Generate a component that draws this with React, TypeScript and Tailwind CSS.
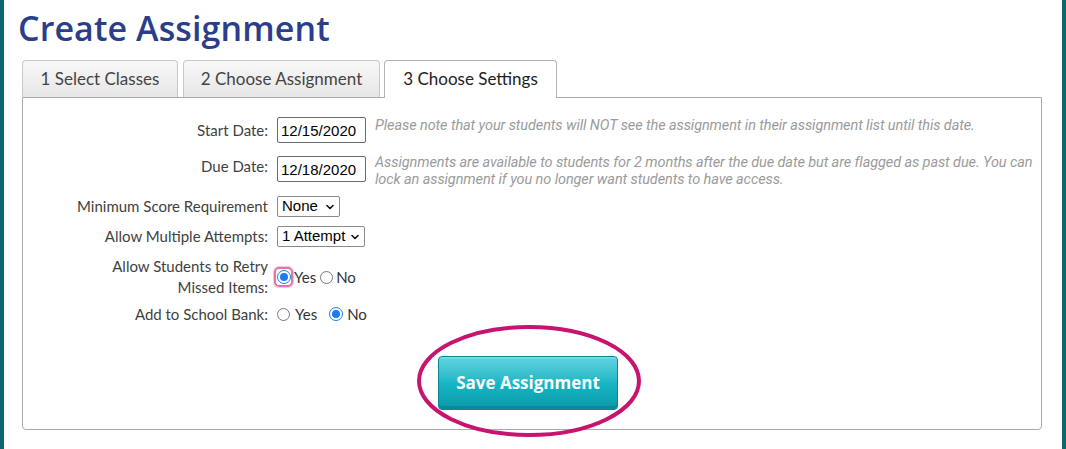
import type { ReactNode } from "react";

const labelFont = { fontFamily: "Lato, 'Open Sans', sans-serif" };

function Radio({ checked }: { checked?: boolean }) {
  return checked ? (
    <span className="flex h-[14px] w-[14px] shrink-0 items-center justify-center rounded-full border-[1.5px] border-[#1a7bf2] bg-white">
      <span className="h-[8px] w-[8px] rounded-full bg-[#1a7bf2]" />
    </span>
  ) : (
    <span className="block h-[13px] w-[13px] shrink-0 rounded-full border border-[#7a7a7a] bg-white" />
  );
}

function Chevron() {
  return (
    <svg width="8" height="6" viewBox="0 0 8 6" className="shrink-0">
      <path d="M1 1.5 L4 4.5 L7 1.5" fill="none" stroke="#111" strokeWidth="1.6" strokeLinecap="round" strokeLinejoin="round" />
    </svg>
  );
}

function FakeSelect({ value, width }: { value: string; width: string }) {
  return (
    <div
      className={`flex h-[21px] items-center justify-between rounded-[2px] border border-[#8a8a8a] bg-white pl-[4px] pr-[5px] text-[15px] text-black ${width}`}
      style={{ fontFamily: "'Liberation Sans', Arial, sans-serif" }}
    >
      <span>{value}</span>
      <Chevron />
    </div>
  );
}

function DateInput({ value }: { value: string }) {
  return (
    <input
      readOnly
      value={value}
      className="h-[26px] w-[89px] shrink-0 rounded-[2px] border border-[#6b6b6b] bg-white px-[3px] text-[15px] text-black outline-none"
      style={{ fontFamily: "'Liberation Sans', Arial, sans-serif" }}
    />
  );
}

function Row({ label, children, className }: { label: ReactNode; children: ReactNode; className: string }) {
  return (
    <div className={`flex ${className}`}>
      <div className="w-[246px] shrink-0 pr-[1px] text-right text-[15px] leading-[21px] text-[#3f3f3f]" style={labelFont}>
        {label}
      </div>
      <div className="ml-[8px] flex min-w-0 flex-1">{children}</div>
    </div>
  );
}

const noteCls = "text-[14.5px] italic leading-[17px] tracking-[-0.1px] text-[#9b9b9b]";
const noteFont = { fontFamily: "Roboto, 'Open Sans', sans-serif" };

const tabs = [
  { label: "1 Select Classes", w: "w-[156px]" },
  { label: "2 Choose Assignment", w: "w-[197px]" },
];

export default function App() {
  return (
    <div className="flex h-[449px] w-[1066px] overflow-hidden border-x-4 border-[#0e6770] bg-white">
      <div className="flex-1 pl-[14px] pr-[16px]">
        <h1
          className="h-[56px] pt-[4px] text-[34px] font-semibold leading-[48px] tracking-[0.1px] text-[#2b3e8c]"
          style={{ fontFamily: "'Open Sans', Lato, sans-serif" }}
        >
          Create Assignment
        </h1>

        <div className="ml-[4px] mt-[4px]">
          {/* tab strip */}
          <div className="flex h-[37px] items-end">
            {tabs.map((t, i) => (
              <div
                key={t.label}
                className={`flex h-[37px] items-center justify-center rounded-t-[4px] border border-b-0 border-[#c9c9c9] bg-gradient-to-b from-[#f8f8f8] to-[#e6e6e6] text-[17px] text-[#444] ${t.w} ${i > 0 ? "ml-[5px]" : ""}`}
                style={labelFont}
              >
                {t.label}
              </div>
            ))}
            <div
              className="relative z-10 -mb-px ml-[4px] flex h-[38px] w-[173px] items-center justify-center rounded-t-[4px] border border-b-0 border-[#b4b4b4] bg-white pb-px text-[17px] text-[#222]"
              style={labelFont}
            >
              3 Choose Settings
            </div>
          </div>

          {/* panel */}
          <div className="relative h-[333px] w-[1020px] rounded-b-[4px] border border-[#aaaaaa] bg-white">
            <Row label="Start Date:" className="mt-[19px] h-[26px] items-center">
              <DateInput value="12/15/2020" />
              <p className={`ml-[9px] ${noteCls}`} style={noteFont}>
                Please note that your students will NOT see the assignment in their assignment list until this date.
              </p>
            </Row>

            <Row label="Due Date:" className="mt-[13px] h-[40px] items-start">
              <DateInput value="12/18/2020" />
              <p className={`-mt-[2px] ml-[9px] ${noteCls}`} style={noteFont}>
                Assignments are available to students for 2 months after the due date but are flagged as past due. You can lock an assignment if you no longer want students to have access.
              </p>
            </Row>

            <Row label="Minimum Score Requirement" className="h-[21px] items-center">
              <FakeSelect value="None" width="w-[63px]" />
            </Row>

            <Row label="Allow Multiple Attempts:" className="mt-[9px] h-[21px] items-center">
              <FakeSelect value="1 Attempt" width="w-[88px]" />
            </Row>

            <Row
              label={
                <>
                  Allow Students to Retry
                  <br />
                  Missed Items:
                </>
              }
              className="mt-[9px] h-[42px] items-center"
            >
              <div className="flex items-center text-[15px] text-[#333]" style={labelFont}>
                <span className="-ml-[3px] flex h-[20px] w-[19px] items-center justify-center rounded-[5px] border-2 border-[#e872a6] shadow-[0_0_0_1px_#f6c4dc]">
                  <Radio checked />
                </span>
                <span className="ml-[1px]">Yes</span>
                <span className="ml-[4px]">
                  <Radio />
                </span>
                <span className="ml-[3px]">No</span>
              </div>
            </Row>

            <Row label="Add to School Bank:" className="mt-[6px] h-[20px] items-center">
              <div className="flex items-center text-[15px] text-[#333]" style={labelFont}>
                <Radio />
                <span className="ml-[5px]">Yes</span>
                <span className="ml-[12px]">
                  <Radio checked />
                </span>
                <span className="ml-[4px]">No</span>
              </div>
            </Row>

            <div className="mt-[32px] flex justify-center pr-[8px]">
              <button
                className="h-[54px] w-[180px] rounded-[4px] border border-[#0c8794] bg-gradient-to-b from-[#5fd3df] via-[#16b6c6] to-[#0a9aa8] text-[17px] font-bold text-white shadow-[inset_0_2px_0_#6fdbe6,inset_0_-3px_0_#0a8a96]"
                style={{ fontFamily: "'Open Sans', Lato, sans-serif" }}
              >
                Save Assignment
              </button>
            </div>

            {/* annotation ellipse */}
            <svg className="pointer-events-none absolute left-[393px] top-[226px]" width="226" height="114" viewBox="0 0 226 114">
              <ellipse cx="113" cy="57" rx="110" ry="54" fill="none" stroke="#c8146e" strokeWidth="4" />
            </svg>
          </div>
        </div>
      </div>
    </div>
  );
}
